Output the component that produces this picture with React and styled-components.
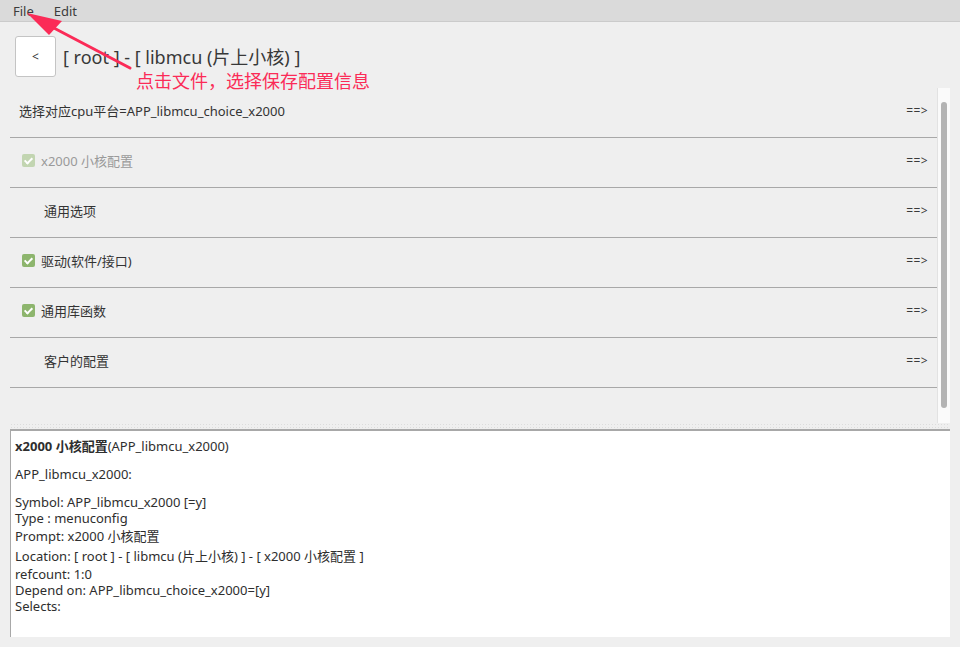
import { createGlobalStyle, styled } from "styled-components";

const GlobalStyle = createGlobalStyle`
  html, body {
    margin: 0;
    padding: 0;
    background: #efefef;
  }
  body {
    font-family: "Noto Sans", "Noto Sans CJK SC", sans-serif;
    font-size: 13px;
    color: #333333;
  }
`;

const rows = [
  { label: "选择对应cpu平台=APP_libmcu_choice_x2000", kind: "plain" },
  { label: "x2000 小核配置", kind: "check", disabled: true },
  { label: "通用选项", kind: "indent" },
  { label: "驱动(软件/接口)", kind: "check" },
  { label: "通用库函数", kind: "check" },
  { label: "客户的配置", kind: "indent" },
];

function App() {
  return (
    <>
      <GlobalStyle />
      <Window>
        <MenuBar>
          <MenuItem>File</MenuItem>
          <MenuItem>Edit</MenuItem>
        </MenuBar>

        <Header>
          <BackButton>&lt;</BackButton>
          <Title>[ root ] - [ libmcu (片上小核) ]</Title>
        </Header>

        <ListArea>
          <List>
            {rows.map((r) => (
              <Row key={r.label}>
                <RowLabel $kind={r.kind} $disabled={r.disabled}>
                  {r.kind === "check" && <CheckBox $disabled={r.disabled} />}
                  {r.label}
                </RowLabel>
                <Enter>==&gt;</Enter>
              </Row>
            ))}
          </List>
          <ScrollTrack>
            <ScrollThumb />
          </ScrollTrack>
        </ListArea>

        <Splitter />

        <Details>
          <Line>
            <b>x2000 小核配置</b>(APP_libmcu_x2000)
          </Line>
          <Line $gap={12}>APP_libmcu_x2000:</Line>
          <Line $gap={12}>Symbol: APP_libmcu_x2000 [=y]</Line>
          <Line>Type : menuconfig</Line>
          <Line $tall>Prompt: x2000 小核配置</Line>
          <Line $tall>Location: [ root ] - [ libmcu (片上小核) ] - [ x2000 小核配置 ]</Line>
          <Line>refcount: 1:0</Line>
          <Line>Depend on: APP_libmcu_choice_x2000=[y]</Line>
          <Line>Selects:</Line>
        </Details>

        <Callout>
          <svg width="140" height="80" viewBox="0 0 140 80">
            <line x1="130" y1="68" x2="52" y2="27" stroke="#fb2b57" strokeWidth="3" strokeLinecap="round" />
            <polygon points="27,13 62,21 49,35" fill="#fb2b57" />
          </svg>
          <CalloutText>点击文件，选择保存配置信息</CalloutText>
        </Callout>
      </Window>
    </>
  );
}

const Window = styled.div`
  position: relative;
  width: 960px;
  height: 647px;
  display: flex;
  flex-direction: column;
  background: #efefef;
  overflow: hidden;
`;

const MenuBar = styled.div`
  height: 21px;
  display: flex;
  align-items: center;
  gap: 20px;
  padding-left: 13px;
  background: #dadada;
  border-bottom: 1px solid #cbcbcb;
`;

const MenuItem = styled.span`
  font-size: 13px;
  color: #3c3c3c;
`;

const Header = styled.div`
  display: flex;
  align-items: center;
  gap: 7px;
  padding: 14px 0 0 15px;
  height: 41px;
  margin-bottom: 11px;
`;

const BackButton = styled.div`
  width: 39px;
  height: 39px;
  display: flex;
  align-items: center;
  justify-content: center;
  background: #ffffff;
  border: 1px solid #c4c4c4;
  border-radius: 3px;
  font-size: 12px;
  color: #333;
`;

const Title = styled.div`
  font-size: 18px;
  color: #383838;
  white-space: nowrap;
  margin-top: -1px;
`;

const ListArea = styled.div`
  display: flex;
  margin: 0 10px;
  height: 335px;
`;

const List = styled.div`
  flex: 1;
  display: flex;
  flex-direction: column;
`;

const Row = styled.div`
  height: 50px;
  box-sizing: border-box;
  display: flex;
  align-items: center;
  justify-content: space-between;
  border-bottom: 1px solid #a8a8a8;
  padding: 0 9px 5px 0;
`;

const RowLabel = styled.div`
  display: flex;
  align-items: center;
  gap: 6px;
  padding-left: ${({ $kind }) => ($kind === "plain" ? 9 : $kind === "indent" ? 34 : 12)}px;
  color: ${({ $disabled }) => ($disabled ? "#9a9a9a" : "#333333")};
  white-space: nowrap;
`;

const CheckBox = styled.span`
  position: relative;
  width: 13px;
  height: 13px;
  border-radius: 2px;
  background: ${({ $disabled }) => ($disabled ? "#c2d5b1" : "#8db56d")};

  &::after {
    content: "";
    position: absolute;
    left: 4px;
    top: 2px;
    width: 3px;
    height: 6px;
    border: solid #ffffff;
    border-width: 0 2px 2px 0;
    transform: rotate(45deg);
  }
`;

const Enter = styled.span`
  font-size: 12px;
  color: #3a3a3a;
  letter-spacing: 0.4px;
`;

const ScrollTrack = styled.div`
  width: 13px;
  background: #fafafa;
  border-left: 1px solid #e2e2e2;
  display: flex;
  justify-content: center;
  padding-top: 14px;
  padding-bottom: 15px;
  box-sizing: border-box;
`;

const ScrollThumb = styled.div`
  width: 6px;
  height: 100%;
  border-radius: 3px;
  background: #b3b3b3;
`;

const Splitter = styled.div`
  height: 6px;
  margin: 0 10px;
  background-color: #efefef;
  background-image: radial-gradient(circle, #dcdcdc 0.8px, transparent 1px);
  background-size: 3px 3px;
`;

const Details = styled.div`
  margin: 0 10px;
  height: 199px;
  padding: 7px 0 0 4px;
  background: #ffffff;
  border-top: 2px solid #a8a8a8;
  border-left: 1px solid #a8a8a8;
  color: #2e2e2e;
`;

const Line = styled.div`
  line-height: ${({ $tall }) => ($tall ? 20 : 16)}px;
  margin-top: ${({ $gap }) => $gap || 0}px;
  white-space: nowrap;

  b {
    font-weight: 700;
  }
`;

const Callout = styled.div`
  position: absolute;
  left: 0;
  top: 0;
  width: 400px;
  height: 100px;
  pointer-events: none;

  svg {
    position: absolute;
    left: 0;
    top: 0;
  }
`;

const CalloutText = styled.div`
  position: absolute;
  left: 136px;
  top: 67px;
  font-size: 18px;
  color: #fb2b57;
  white-space: nowrap;
`;

export default App;
